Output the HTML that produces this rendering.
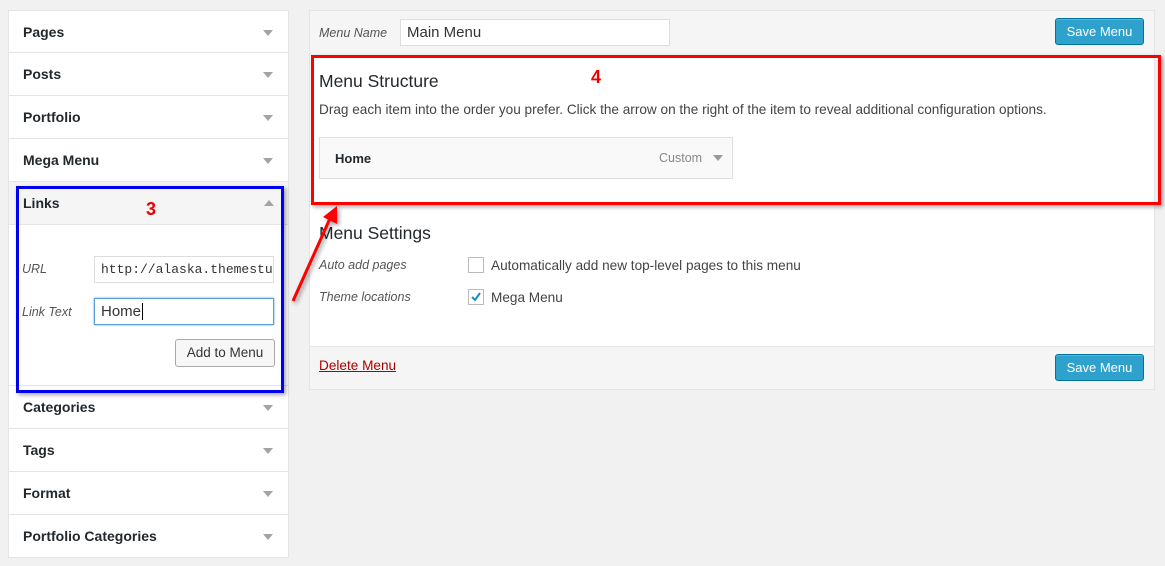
<!DOCTYPE html>
<html><head><style>
*{margin:0;padding:0;box-sizing:border-box}
body{width:1165px;height:566px;background:#f1f1f1;font-family:"Liberation Sans",sans-serif;color:#222;position:relative;overflow:hidden;font-size:13px}
.a{position:absolute}
.row{position:absolute;left:8px;width:281px;height:43px;background:#fff;border:1px solid #e5e5e5;border-top:none}
.row b{position:absolute;left:14px;top:13px;font-size:14px;font-weight:bold;color:#23282d}
.tri{position:absolute;right:15px;top:19px;width:0;height:0;border-left:5px solid transparent;border-right:5px solid transparent;border-top:6px solid #a0a5aa}
.btn{position:absolute;background:#2ea2cc;border:1px solid #0074a2;border-radius:3px;color:#fff;font-size:13px;text-align:center;line-height:25px;width:89px;height:27px;box-shadow:inset 0 1px 0 rgba(120,200,230,.5)}
.it{font-style:italic;color:#555;font-size:12.5px}
.t{font-size:13.6px;color:#444}
</style></head><body>
<div class="row" style="top:10px;border-top:1px solid #e5e5e5"><b>Pages</b><i class="tri"></i></div>
<div class="row" style="top:53px"><b>Posts</b><i class="tri"></i></div>
<div class="row" style="top:96px"><b>Portfolio</b><i class="tri"></i></div>
<div class="row" style="top:139px"><b>Mega Menu</b><i class="tri"></i></div>
<div class="row" style="top:182px;height:204px;background:#fff"></div>
<div class="a" style="left:9px;top:182px;width:279px;height:43px;background:#f5f5f5;border-bottom:1px solid #e5e5e5"></div>
<div class="a" style="left:23px;top:195px;font-size:14px;font-weight:bold;color:#23282d">Links</div>
<div class="a" style="left:264px;top:200px;border-left:5px solid transparent;border-right:5px solid transparent;border-bottom:6px solid #a0a5aa"></div>
<div class="a" style="left:146px;top:199px;color:#e00;font-weight:bold;font-size:18px">3</div>
<div class="a it" style="left:22px;top:262px">URL</div>
<div class="a" style="left:94px;top:256px;width:180px;height:27px;border:1px solid #ddd;font-family:'Liberation Mono',monospace;font-size:13px;line-height:25px;padding-left:6px;overflow:hidden;white-space:nowrap;color:#333">http://alaska.themestu</div>
<div class="a it" style="left:22px;top:305px">Link Text</div>
<div class="a" style="left:94px;top:298px;width:180px;height:27px;border:1px solid #5b9dd9;box-shadow:0 0 2px rgba(30,140,190,.8);font-size:15px;line-height:25px;padding-left:6px;color:#333">Home<span style="border-left:1px solid #000;margin-left:1px"></span></div>
<div class="a" style="left:175px;top:339px;width:100px;height:28px;border:1px solid #aaa;border-radius:3px;background:#f7f7f7;text-align:center;line-height:26px;color:#333;font-size:13.5px">Add to Menu</div>
<div class="row" style="top:386px"><b>Categories</b><i class="tri"></i></div>
<div class="row" style="top:429px"><b>Tags</b><i class="tri"></i></div>
<div class="row" style="top:472px"><b>Format</b><i class="tri"></i></div>
<div class="row" style="top:515px"><b>Portfolio Categories</b><i class="tri"></i></div>
<div class="a" style="left:16px;top:186px;width:268px;height:207px;border:3px solid #0000ee;box-shadow:2px 2px 4px rgba(0,0,0,.35);z-index:5"></div>

<div class="a" style="left:309px;top:10px;width:846px;height:380px;background:#fff;border:1px solid #e5e5e5"></div>
<div class="a" style="left:310px;top:11px;width:844px;height:45px;background:#f5f5f5"></div>
<div class="a it" style="left:319px;top:26px">Menu Name</div>
<div class="a" style="left:400px;top:19px;width:270px;height:27px;background:#fff;border:1px solid #ddd;font-size:15px;line-height:25px;padding-left:6px;color:#333">Main Menu</div>
<div class="btn" style="left:1055px;top:18px">Save Menu</div>
<div class="a" style="left:319px;top:71px;font-size:17.5px;color:#23282d">Menu Structure</div>
<div class="a t" style="left:319px;top:102px">Drag each item into the order you prefer. Click the arrow on the right of the item to reveal additional configuration options.</div>
<div class="a" style="left:319px;top:137px;width:414px;height:42px;background:#f9f9f9;border:1px solid #dfdfdf"></div>
<div class="a" style="left:335px;top:151px;font-weight:bold;color:#23282d">Home</div>
<div class="a" style="left:659px;top:151px;color:#888;font-size:12.5px">Custom</div>
<div class="a" style="left:713px;top:155px;border-left:5px solid transparent;border-right:5px solid transparent;border-top:6px solid #999"></div>
<div class="a" style="left:311px;top:55px;width:850px;height:150px;border:3px solid #f00;box-shadow:2px 2px 4px rgba(0,0,0,.35)"></div>
<div class="a" style="left:591px;top:67px;color:#e00;font-weight:bold;font-size:18px">4</div>
<div class="a" style="left:319px;top:223px;font-size:17.5px;color:#23282d">Menu Settings</div>
<div class="a it" style="left:319px;top:258px">Auto add pages</div>
<div class="a" style="left:468px;top:257px;width:16px;height:16px;border:1px solid #bbb;background:#fff"></div>
<div class="a t" style="left:491px;top:258px">Automatically add new top-level pages to this menu</div>
<div class="a it" style="left:319px;top:290px">Theme locations</div>
<div class="a" style="left:468px;top:289px;width:16px;height:16px;border:1px solid #bbb;background:#fff"><svg width="14" height="14" viewBox="0 0 14 14"><path d="M3 7l3 3 5-7" stroke="#1e8cbe" stroke-width="2" fill="none"/></svg></div>
<div class="a t" style="left:491px;top:290px">Mega Menu</div>
<div class="a" style="left:310px;top:346px;width:844px;height:43px;background:#f5f5f5;border-top:1px solid #e5e5e5"></div>
<div class="a t" style="left:319px;top:358px;color:#a00;text-decoration:underline">Delete Menu</div>
<div class="btn" style="left:1055px;top:354px">Save Menu</div>
<svg class="a" style="left:285px;top:200px;z-index:6" width="60" height="110"><g style="filter:drop-shadow(2px 2px 2px rgba(0,0,0,.4))"><path d="M8 101L47 14" stroke="#f00" stroke-width="3"/><path d="M52 6L52 24L38 17Z" fill="#f00"/></g></svg>
</body></html>
